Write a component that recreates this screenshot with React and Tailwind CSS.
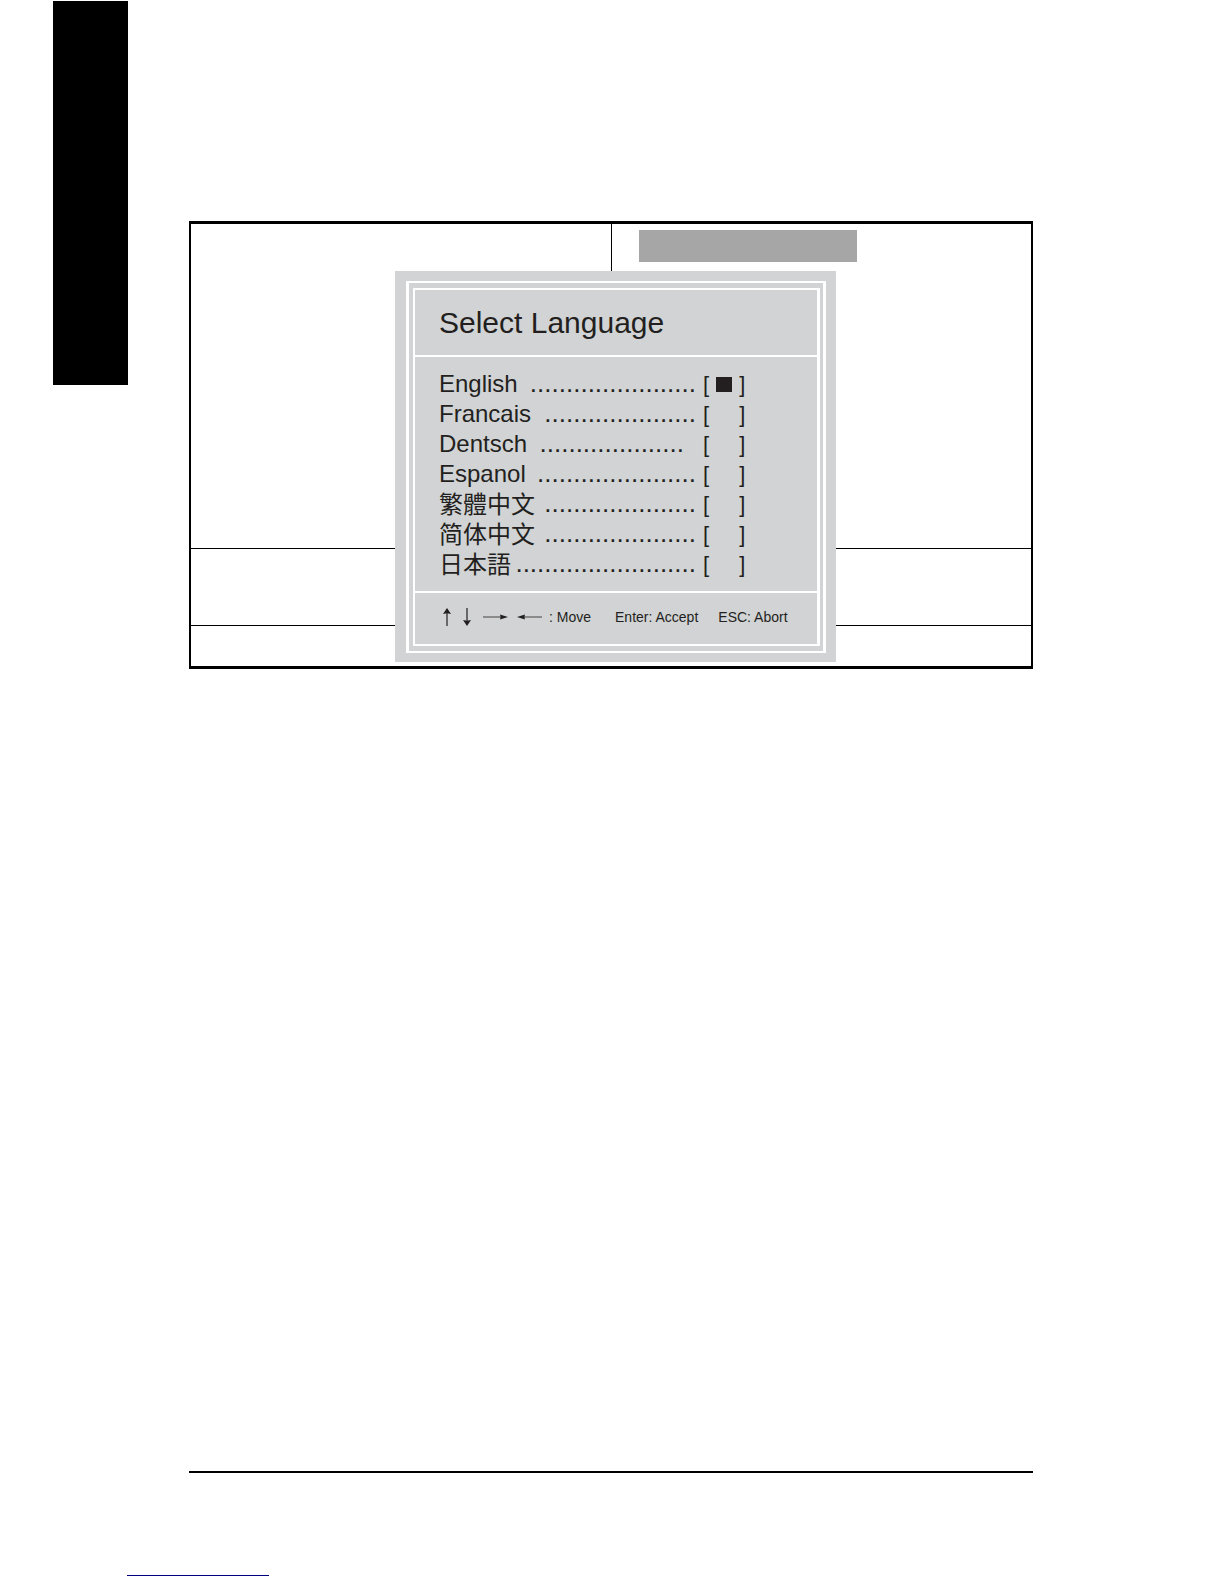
import React, { useState } from "react";

// Languages in the list with the length of each dot leader
const languages = [
  { id: "en", name: "English", dots: 23 },
  { id: "fr", name: "Francais", dots: 21 },
  { id: "de", name: "Dentsch", dots: 20, short: true },
  { id: "es", name: "Espanol", dots: 22 },
  { id: "zh-TW", name: "繁體中文", dots: 21, cjk: "font-['Liberation_Sans','Noto_Sans_CJK_TC',sans-serif]" },
  { id: "zh-CN", name: "简体中文", dots: 21, cjk: "font-['Liberation_Sans','Noto_Sans_CJK_SC',sans-serif]" },
  { id: "ja", name: "日本語", dots: 25, cjk: "font-['Liberation_Sans','Noto_Sans_CJK_JP',sans-serif]" },
];

const VerticalArrow = ({ className = "" }) => (
  <svg width="8" height="18" viewBox="0 0 8 18" className={className} aria-hidden="true">
    <path d="M4 5V18" stroke="currentColor" strokeWidth="1.2" />
    <path d="M4 0L8 6L4 5.2L0 6Z" fill="currentColor" />
  </svg>
);

const HorizontalArrow = ({ className = "" }) => (
  <svg width="25" height="6" viewBox="0 0 25 6" className={className} aria-hidden="true">
    <path d="M0 3H18" stroke="currentColor" strokeWidth="0.8" />
    <path d="M25 3L17 0.4L17.6 3L17 5.6Z" fill="currentColor" />
  </svg>
);

const LanguageRow = ({ language, checked, onSelect }) => (
  <label className="flex h-[30px] items-baseline gap-[7px] text-[22px] leading-[30px]">
    <span className="flex w-[257px] items-baseline justify-between">
      <span
        lang={language.id}
        className={language.cjk ? `self-start pt-0.5 text-2xl leading-[30px] ${language.cjk}` : "text-2xl leading-[30px]"}
      >
        {language.name}
      </span>
      <span aria-hidden="true" className={language.short ? "pr-3 text-[26px] leading-[30px]" : "text-[26px] leading-[30px]"}>
        {".".repeat(language.dots)}
      </span>
    </span>
    <span>[</span>
    <input
      type="radio"
      name="language"
      value={language.id}
      checked={checked}
      onChange={onSelect}
      className="h-[15px] w-4 appearance-none checked:bg-[#231f20]"
    />
    <span>]</span>
  </label>
);

const LanguageDialog = () => {
  const [selected, setSelected] = useState("en");

  return (
    <section className="w-[441px] bg-[#d1d3d4] pt-[10px] pr-[10px] pb-[9px] pl-[11px] text-[#231f20]">
      {/* Double white frame */}
      <div className="border-x-3 border-y-2 border-white py-[5px] pr-[3px] pl-1">
        <div className="border-2 border-r-3 border-white">
          <h1 className="border-b-2 border-white py-[14px] pl-6 text-[30px] leading-[37px]">Select Language</h1>

          <div className="border-b-2 border-white pt-[11px] pb-[13px] pl-6">
            {languages.map((language) => (
              <LanguageRow
                key={language.id}
                language={language}
                checked={selected === language.id}
                onSelect={() => setSelected(language.id)}
              />
            ))}
          </div>

          {/* Key hints */}
          <div className="flex h-[51px] items-center pb-1 pl-7 text-sm">
            <VerticalArrow />
            <VerticalArrow className="ml-3 rotate-180" />
            <HorizontalArrow className="ml-3" />
            <HorizontalArrow className="ml-[9px] rotate-180" />
            <span className="ml-[7px]">: Move</span>
            <span className="ml-6">Enter: Accept</span>
            <span className="ml-5">ESC: Abort</span>
          </div>
        </div>
      </div>
    </section>
  );
};

const App = () => {
  return (
    <div className="min-h-screen bg-white font-['Liberation_Sans',Arial,sans-serif]">
      <div className="flex items-start">
        {/* Side tab */}
        <aside className="mt-px ml-[53px] h-[384px] w-[75px] shrink-0 bg-black" />

        <main className="mt-[221px] mr-[191px] ml-[61px] flex-1">
          <div className="grid border-x-2 border-y-3 border-black">
            {/* Screen behind the dialog */}
            <div className="col-start-1 row-start-1 flex flex-col">
              <div className="grid flex-1 grid-cols-2 border-b border-black">
                <div />
                <div className="border-l border-black pt-[6px] pl-[27px]">
                  <div className="h-8 w-[218px] bg-[#a6a6a6]" />
                </div>
              </div>
              <div className="h-[77px] border-b border-black" />
              <div className="h-10" />
            </div>

            <div className="col-start-1 row-start-1 mt-[47px] mb-1 ml-[9px] justify-self-center">
              <LanguageDialog />
            </div>
          </div>
        </main>
      </div>

      <footer className="mt-[802px]">
        <div className="mr-[191px] ml-[189px] border-t-2 border-black" />
        <div className="mt-[102px] ml-[127px] w-[142px] border-t border-[#000080]" />
      </footer>
    </div>
  );
};

export default App;
